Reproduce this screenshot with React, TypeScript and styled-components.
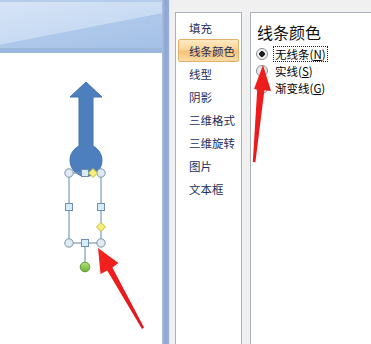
import React from "react";
import styled, { createGlobalStyle } from "styled-components";

const Global = createGlobalStyle`
  html, body { margin: 0; padding: 0; background: #ffffff; }
  body { font-family: "Noto Sans CJK SC", "Liberation Sans", sans-serif; }
  * { box-sizing: border-box; }
`;

const Page = styled.div`
  position: relative;
  width: 371px;
  height: 344px;
  display: flex;
  overflow: hidden;
`;

const Workspace = styled.div`
  width: 162px;
  display: flex;
  flex-direction: column;
`;

const Ribbon = styled.div`
  height: 53px;
  border-top: 2px solid #b7cce9;
  border-bottom: 5px solid #9db8de;
  background: linear-gradient(169deg, #d6e4f7 0%, #c8dbf3 54.5%, #adc8ea 55.5%, #a5c1e6 100%);
`;

const Slide = styled.div`
  flex: 1;
  background: #ffffff;
`;

const FrameBar = styled.div`
  width: 7px;
  background: linear-gradient(90deg, #a9bde0 0%, #8ea7d2 50%, #98afd7 100%);
`;

const Dialog = styled.div`
  flex: 1;
  background: #f0f0f0;
  border-left: 1px solid #dfe6ef;
  display: flex;
  gap: 8px;
  padding: 12px 0 0 5px;
`;

const NavList = styled.ul`
  width: 67px;
  margin: 0;
  padding: 3px 1px 0;
  list-style: none;
  background: #ffffff;
  border: 1px solid #a9b0b8;
  border-bottom: none;
`;

const NavItem = styled.li<{ $active?: boolean }>`
  height: 23px;
  margin: 0 1px;
  padding-left: 10px;
  display: flex;
  align-items: center;
  font-size: 11.5px;
  color: #1c2f5e;
  white-space: nowrap;
  border-radius: 2px;
  border: 1px solid ${(p) => (p.$active ? "#e2b06a" : "transparent")};
  background: ${(p) =>
    p.$active ? "linear-gradient(180deg, #fde9c3 0%, #fbd596 45%, #f8c27a 55%, #fcdca4 100%)" : "transparent"};
`;

const Content = styled.div`
  flex: 1;
  background: #ffffff;
  border: 1px solid #a9b0b8;
  border-right: none;
  border-bottom: none;
  padding: 9px 0 0 5px;
`;

const Heading = styled.div`
  font-size: 16px;
  line-height: 20px;
  color: #111111;
  margin: 0 0 3px 1px;
`;

const RadioRow = styled.label`
  height: 17px;
  display: flex;
  align-items: center;
  gap: 6px;
  font-size: 11.5px;
  color: #000000;
`;

const RadioDot = styled.span<{ $checked?: boolean }>`
  width: 12px;
  height: 12px;
  border-radius: 50%;
  border: 1px solid #8a8f96;
  background: radial-gradient(circle at 50% 50%, #1b1b1b 0, #1b1b1b ${(p) => (p.$checked ? "2.6px" : "0")}, #f4f4f4 ${(p) => (p.$checked ? "3px" : "0")}, #e2e2e2 100%);
  flex: none;
`;

const RadioText = styled.span<{ $focused?: boolean }>`
  padding: 0 1px;
  line-height: 14px;
  outline: ${(p) => (p.$focused ? "1px dotted #222" : "none")};
  outline-offset: 0;
  white-space: nowrap;
`;

const Key = styled.span`
  text-decoration: underline;
`;

const Overlay = styled.svg`
  position: absolute;
  left: 0;
  top: 0;
  pointer-events: none;
`;

const navItems = ["填充", "线条颜色", "线型", "阴影", "三维格式", "三维旋转", "图片", "文本框"];

const Handle = ({ x, y }: { x: number; y: number }) => (
  <circle cx={x} cy={y} r={4.2} fill="#dfeaf3" stroke="#7d96ad" strokeWidth={1} />
);
const Square = ({ x, y }: { x: number; y: number }) => (
  <rect x={x - 3.5} y={y - 3.5} width={7} height={7} fill="#d6ecfa" stroke="#6e8fae" strokeWidth={1} />
);
const Diamond = ({ x, y }: { x: number; y: number }) => (
  <polygon
    points={`${x},${y - 4.5} ${x + 4.5},${y} ${x},${y + 4.5} ${x - 4.5},${y}`}
    fill="#f6f07a"
    stroke="#c7b944"
    strokeWidth={1}
  />
);

export default function App() {
  return (
    <>
      <Global />
      <Page>
        <Workspace>
          <Ribbon />
          <Slide>
            <svg width="162" height="291" viewBox="0 53 162 291" style={{ display: "block" }}>
              <defs>
                <linearGradient id="green" x1="0" y1="0" x2="0" y2="1">
                  <stop offset="0" stopColor="#b6e07a" />
                  <stop offset="1" stopColor="#6fb33a" />
                </linearGradient>
              </defs>
              <path
                d="M86 82 L102 97 L93 97 L93 146 A16 16 0 1 1 79 146 L79 97 L70 97 Z"
                fill="#4d7ebd"
                stroke="#4373b1"
                strokeWidth={1}
              />
              <g stroke="#7f9cb8" strokeWidth={1.2} fill="none">
                <line x1={69} y1={173} x2={69} y2={243} />
                <line x1={101} y1={173} x2={101} y2={243} />
                <line x1={69} y1={243} x2={101} y2={243} />
                <line x1={69} y1={173} x2={101} y2={173} />
                <line x1={85} y1={243} x2={85} y2={267} />
              </g>
              <Handle x={69} y={173} />
              <Square x={85} y={173} />
              <Handle x={101} y={173} />
              <Diamond x={93} y={173} />
              <Square x={69} y={207} />
              <Square x={101} y={207} />
              <Diamond x={101} y={227} />
              <Handle x={69} y={243} />
              <Handle x={101} y={243} />
              <Square x={85} y={243} />
              <circle cx={85} cy={267} r={4.8} fill="url(#green)" stroke="#5f9a34" strokeWidth={1} />
            </svg>
          </Slide>
        </Workspace>
        <FrameBar />
        <Dialog>
          <NavList>
            {navItems.map((t) => (
              <NavItem key={t} $active={t === "线条颜色"}>
                {t}
              </NavItem>
            ))}
          </NavList>
          <Content>
            <Heading>线条颜色</Heading>
            <RadioRow>
              <RadioDot $checked />
              <RadioText $focused>
                无线条(<Key>N</Key>)
              </RadioText>
            </RadioRow>
            <RadioRow>
              <RadioDot />
              <RadioText>
                实线(<Key>S</Key>)
              </RadioText>
            </RadioRow>
            <RadioRow>
              <RadioDot />
              <RadioText>
                渐变线(<Key>G</Key>)
              </RadioText>
            </RadioRow>
          </Content>
        </Dialog>
        <Overlay width="371" height="344" viewBox="0 0 371 344">
          <defs>
            <linearGradient id="red" x1="0" y1="0" x2="1" y2="1">
              <stop offset="0" stopColor="#f5231f" />
              <stop offset="1" stopColor="#e0141a" />
            </linearGradient>
          </defs>
          <polygon
            points="98,248 118.5,263 112.4,267.4 144,327.5 142,329 107.2,270.4 100.5,274"
            fill="url(#red)"
          />
          <polygon
            points="263,65 271,91 264.4,90.2 255.4,162.2 252.8,162 257.2,89.6 254,89"
            fill="url(#red)"
          />
        </Overlay>
      </Page>
    </>
  );
}
